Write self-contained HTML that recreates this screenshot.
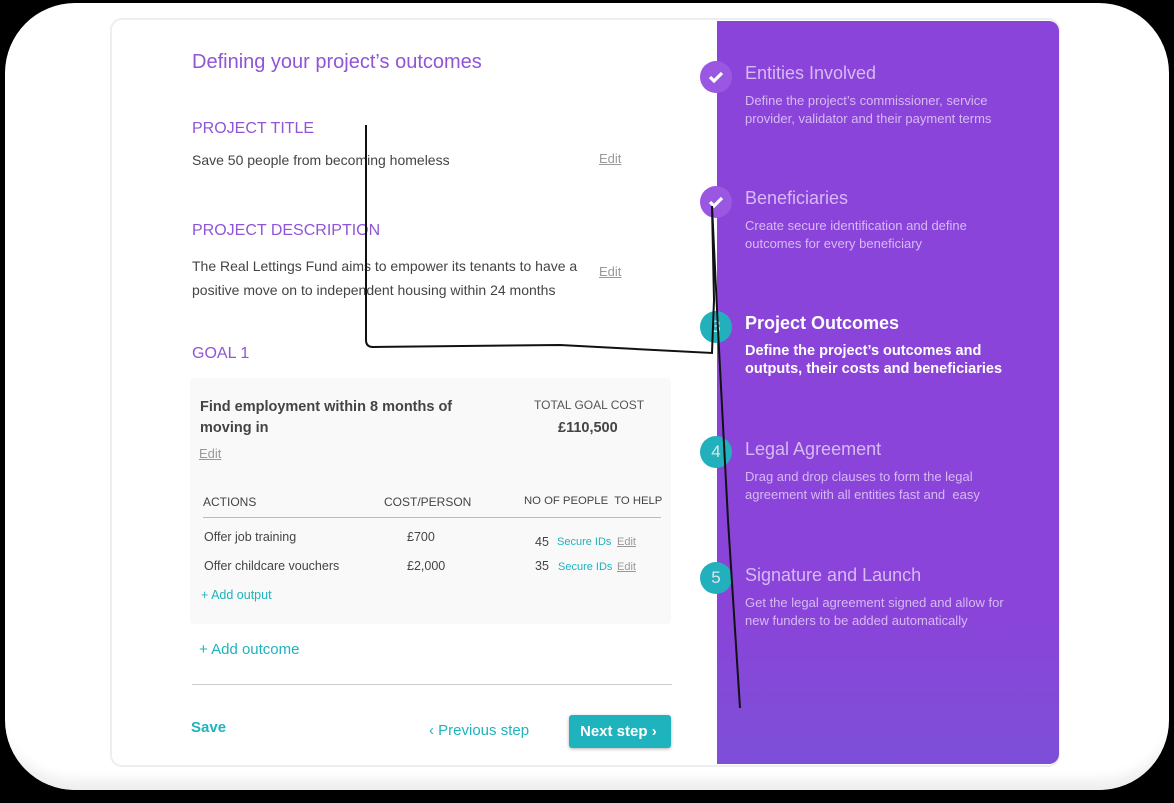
<!DOCTYPE html>
<html><head><meta charset="utf-8"><style>
*{margin:0;padding:0;box-sizing:border-box}
body{width:1174px;height:803px;background:#000;position:relative;overflow:hidden;font-family:"Liberation Sans",sans-serif}
.outer{position:absolute;left:5px;top:3px;width:1164px;height:787px;background:#fff;border-radius:70px;box-shadow:inset 0 -22px 12px -12px #eee}
.card{position:absolute;left:110px;top:18px;width:950px;height:749px;background:#fff;border:2px solid #eee;border-radius:12px;overflow:hidden}
.panel{position:absolute;left:717px;top:21px;width:342px;height:743px;background:linear-gradient(#8a44d9 80%,#7d4fd8);border-radius:0 10px 10px 0}
.a{position:absolute;white-space:nowrap}
.pu{color:#9055d6}
.g{color:#444}
.t{color:#1fb3bd}
.e{color:#999;text-decoration:underline;font-size:13px}
.circ{position:absolute;left:700px;width:32px;height:32px;border-radius:50%;color:#d8e8f0;font-size:17px;text-align:center;line-height:32px}
.ck{background:#9a58e2}
.tl{background:#22b0bc}
.st{position:absolute;left:745px;color:#d7b9f3}
.st b{display:block;font-weight:normal;font-size:18px;margin-bottom:8px}
.st span{display:block;font-size:13px;line-height:18px}
</style></head><body>
<div class="outer"></div>
<div class="card"></div>
<div class="panel"></div>
<div class="a pu" style="left:192px;top:51px;font-size:20px">Defining your project’s outcomes</div>
<div class="a pu" style="left:192px;top:120px;font-size:16px">PROJECT TITLE</div>
<div class="a g" style="left:192px;top:152px;font-size:14px">Save 50 people from becoming homeless</div>
<div class="a e" style="left:599px;top:151px">Edit</div>
<div class="a pu" style="left:192px;top:222px;font-size:16px">PROJECT DESCRIPTION</div>
<div class="a g" style="left:192px;top:254px;font-size:14px;line-height:24px">The Real Lettings Fund aims to empower its tenants to have a<br>positive move on to independent housing within 24 months</div>
<div class="a e" style="left:599px;top:264px">Edit</div>
<div class="a pu" style="left:192px;top:345px;font-size:16px">GOAL 1</div>
<div class="a" style="left:190px;top:378px;width:481px;height:246px;background:#f9f9f9;border-radius:4px"></div>
<div class="a" style="left:200px;top:397px;font-size:14.5px;font-weight:bold;color:#444;line-height:21px">Find employment within 8 months of<br>moving in</div>
<div class="a e" style="left:199px;top:446px">Edit</div>
<div class="a" style="left:534px;top:398px;font-size:12px;color:#555">TOTAL GOAL COST</div>
<div class="a" style="left:558px;top:420px;font-size:14.5px;font-weight:bold;color:#444">£110,500</div>
<div class="a" style="left:203px;top:495px;font-size:12px;color:#444">ACTIONS</div>
<div class="a" style="left:384px;top:495px;font-size:12px;color:#444">COST/PERSON</div>
<div class="a" style="left:524px;top:495px;font-size:11.3px;color:#444">NO OF PEOPLE&nbsp; TO HELP</div>
<div class="a" style="left:203px;top:517px;width:458px;height:1px;background:#bbb"></div>
<div class="a" style="left:204px;top:530px;font-size:12.5px;color:#444">Offer job training</div>
<div class="a" style="left:407px;top:530px;font-size:12.5px;color:#444">£700</div>
<div class="a" style="left:535px;top:535px;font-size:12.5px;color:#444">45</div>
<div class="a t" style="left:557px;top:536px;font-size:11px">Secure IDs</div>
<div class="a e" style="left:617px;top:536px;font-size:11px">Edit</div>
<div class="a" style="left:204px;top:559px;font-size:12.5px;color:#444">Offer childcare vouchers</div>
<div class="a" style="left:407px;top:559px;font-size:12.5px;color:#444">£2,000</div>
<div class="a" style="left:535px;top:559px;font-size:12.5px;color:#444">35</div>
<div class="a t" style="left:558px;top:561px;font-size:11px">Secure IDs</div>
<div class="a e" style="left:617px;top:561px;font-size:11px">Edit</div>
<div class="a t" style="left:201px;top:588px;font-size:12.5px">+ Add output</div>
<div class="a t" style="left:199px;top:641px;font-size:15px">+ Add outcome</div>
<div class="a" style="left:192px;top:684px;width:480px;height:1px;background:#ccc"></div>
<div class="a t" style="left:191px;top:719px;font-size:15px;font-weight:bold">Save</div>
<div class="a t" style="left:429px;top:722px;font-size:15px">‹ Previous step</div>
<div class="a" style="left:569px;top:715px;width:102px;height:33px;background:#1fb3bd;border-radius:3px;box-shadow:0 1px 3px rgba(0,0,0,.3);color:#fff;font-size:15px;font-weight:bold;line-height:33px;padding-left:11px">Next step ›</div>

<div class="circ ck" style="top:61px"><svg width="32" height="32"><path d="M10 16l4 4 8-8" stroke="#fff" stroke-width="3.2" fill="none"/></svg></div>
<div class="circ ck" style="top:186px"><svg width="32" height="32"><path d="M10 16l4 4 8-8" stroke="#fff" stroke-width="3.2" fill="none"/></svg></div>
<div class="circ tl" style="top:311px">3</div>
<div class="circ tl" style="top:436px">4</div>
<div class="circ tl" style="top:562px">5</div>
<div class="st" style="top:63px"><b>Entities Involved</b><span>Define the project’s commissioner, service<br>provider, validator and their payment terms</span></div>
<div class="st" style="top:188px"><b>Beneficiaries</b><span>Create secure identification and define<br>outcomes for every beneficiary</span></div>
<div class="st" style="top:313px;color:#fff;font-weight:bold"><b style="font-weight:bold">Project Outcomes</b><span style="font-size:14.5px">Define the project’s outcomes and<br>outputs, their costs and beneficiaries</span></div>
<div class="st" style="top:439px"><b>Legal Agreement</b><span>Drag and drop clauses to form the legal<br>agreement with all entities fast and&nbsp; easy</span></div>
<div class="st" style="top:565px"><b>Signature and Launch</b><span>Get the legal agreement signed and allow for<br>new funders to be added automatically</span></div>
<svg class="a" style="left:0;top:0" width="1174" height="803"><path d="M366 125 L366 340 Q366 347 373 347 L560 345 L712 353 L714 300 L712 206 M712 206 L718 330 L728 520 L740 708" stroke="#111" stroke-width="2" fill="none"/></svg>
</body></html>
